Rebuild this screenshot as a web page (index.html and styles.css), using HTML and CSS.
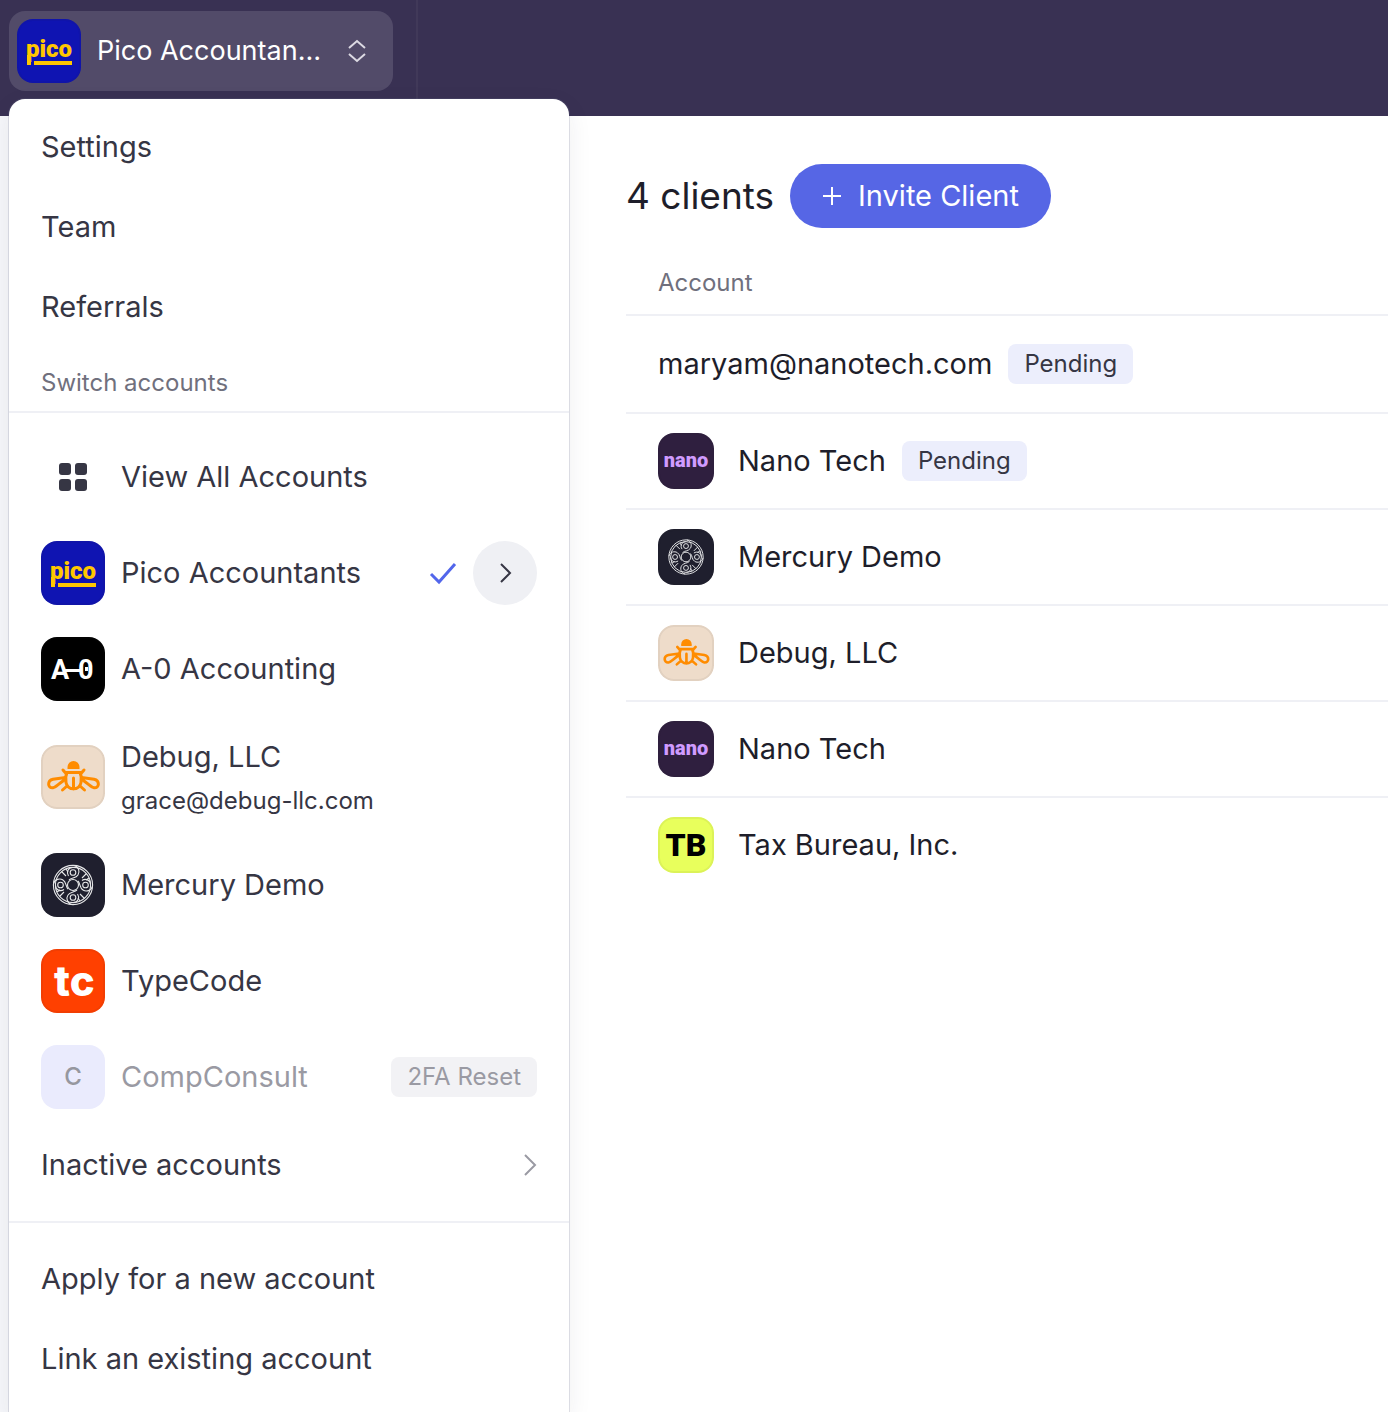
FILE: index.html
```html
<!DOCTYPE html>
<html lang="en">
<head>
<meta charset="utf-8">
<meta name="viewport" content="width=device-width, initial-scale=1">
<title>Clients</title>
<link rel="stylesheet" href="styles.css">
</head>
<body>
<svg class="sprite" aria-hidden="true">
  <symbol id="logo-debug" viewBox="0 0 64 64">
    <rect width="64" height="64" fill="#eedcca"/>
    <path fill="#ff8c00" d="M26.500 24v-2a6 6 0 0 1 12 0v2z"/>
    <g fill="none" stroke="#ff8c00" stroke-width="3" stroke-linecap="round">
      <path d="M26 27.500h13c1.500 3 1.500 7 1 10a7.600 7.600 0 0 1-15 0c-.5-3-.5-7 1-10zM32.500 33v11M22 25l3 3.500M43 25l-3 3.500M26 41l-4.500 4M39 41l4.500 4"/>
      <path d="M24.500 32.500L12 34.200c-6 1.300-5.600 9.200 0 8.600 2.600-.4 4-2.600 12-8.300M40.500 32.500L53 34.200c6 1.300 5.600 9.200 0 8.600-2.600-.4-4-2.600-12-8.300"/>
    </g>
  </symbol>
  <symbol id="logo-mercury" viewBox="0 0 64 64">
    <rect width="64" height="64" fill="#1f1f2e"/>
    <g fill="none" stroke="#e6e7e8" stroke-width="1.100">
      <circle cx="32" cy="32" r="19.600"/>
      <circle cx="32" cy="32" r="17.600"/>
      <circle cx="32" cy="32" r="5.500"/>
      <g id="knot">
        <circle cx="32" cy="19.500" r="2.800"/>
        <path d="M33 12.500c5 1 6 6.500 4 9.500-2 3.500-6.500 2.500-9 5"/>
        <path d="M31.500 14.500c-4.500 0-6.500 5-4 8.500"/>
        <path d="M20.500 18.500l4.500 4.500M25 16l2 3"/>
      </g>
      <use href="#knot" transform="rotate(90 32 32)"/>
      <use href="#knot" transform="rotate(180 32 32)"/>
      <use href="#knot" transform="rotate(270 32 32)"/>
    </g>
  </symbol>
</svg>

<div class="app">
  <header class="topbar">
    <div class="topbar-side">
      <button class="switcher" type="button" aria-haspopup="menu" aria-expanded="true">
        <span class="avatar avatar-pico"><svg viewBox="0 0 64 64" aria-hidden="true"><text x="9" y="38">pico</text><path d="M10 36h4v10h-4zM17 42h38v4H17z"/></svg></span>
        <span class="switcher-name">Pico Accountan…</span>
        <svg class="switcher-icon" viewBox="0 0 24 24" aria-hidden="true"><path d="M4 9l8-7 8 7M4 15l8 7 8-7"/></svg>
      </button>
    </div>
  </header>

  <nav class="menu" aria-label="Account menu">
    <a class="menu-item" href="#">Settings</a>
    <a class="menu-item" href="#">Team</a>
    <a class="menu-item" href="#">Referrals</a>
    <h2 class="menu-label">Switch accounts</h2>
    <div class="accounts">
      <a class="account" href="#">
        <span class="grid-icon"><svg viewBox="0 0 28 28" aria-hidden="true"><rect width="12" height="12" rx="3"/><rect x="16" width="12" height="12" rx="3"/><rect y="16" width="12" height="12" rx="3"/><rect x="16" y="16" width="12" height="12" rx="3"/></svg></span>
        <span class="account-name">View All Accounts</span>
      </a>
      <div class="account">
        <a class="account-link" href="#">
          <span class="avatar avatar-pico"><svg viewBox="0 0 64 64" aria-hidden="true"><text x="9" y="38">pico</text><path d="M10 36h4v10h-4zM17 42h38v4H17z"/></svg></span>
          <span class="account-name">Pico Accountants</span>
          <svg class="check" viewBox="0 0 28 24" aria-hidden="true"><path d="M2 13l8 8L26 3"/></svg>
        </a>
        <button class="round-button" type="button" aria-label="Open Pico Accountants"><svg viewBox="0 0 24 24" aria-hidden="true"><path d="M8 3l9 9-9 9"/></svg></button>
      </div>
      <a class="account" href="#">
        <span class="avatar avatar-a0"><svg viewBox="0 0 64 64" aria-hidden="true"><text x="10" y="42">A</text><text x="37" y="42">0</text><path d="M24 32h16v3H24zM44 30h3v4h-3z"/></svg></span>
        <span class="account-name">A-0 Accounting</span>
      </a>
      <a class="account account-tall" href="#">
        <span class="avatar"><svg aria-hidden="true"><use href="#logo-debug"/></svg></span>
        <span class="account-name">Debug, LLC<span class="account-email">grace@debug-llc.com</span></span>
      </a>
      <a class="account" href="#">
        <span class="avatar"><svg aria-hidden="true"><use href="#logo-mercury"/></svg></span>
        <span class="account-name">Mercury Demo</span>
      </a>
      <a class="account" href="#">
        <span class="avatar avatar-typecode"><svg viewBox="0 0 64 64" aria-hidden="true"><text x="13" y="47">tc</text></svg></span>
        <span class="account-name">TypeCode</span>
      </a>
      <a class="account account-disabled" href="#" aria-disabled="true">
        <span class="avatar avatar-letter">C</span>
        <span class="account-name">CompConsult</span>
        <span class="badge badge-muted">2FA Reset</span>
      </a>
      <button class="menu-item menu-more" type="button">Inactive accounts<svg viewBox="0 0 14 24" aria-hidden="true"><path d="M2 2l10 10L2 22"/></svg></button>
    </div>
    <div class="menu-footer">
      <a class="menu-item" href="#">Apply for a new account</a>
      <a class="menu-item" href="#">Link an existing account</a>
    </div>
  </nav>

  <div class="body">
    <aside class="sidebar"></aside>
    <main class="content">
      <div class="heading">
        <h1>4 clients</h1>
        <button class="invite" type="button"><svg viewBox="0 0 20 20" aria-hidden="true"><path d="M10 1v18M1 10h18"/></svg>Invite Client</button>
      </div>
      <table class="clients">
        <thead><tr><th scope="col">Account</th></tr></thead>
        <tbody>
          <tr><td><div class="client"><span class="client-name">maryam@nanotech.com</span><span class="badge">Pending</span></div></td></tr>
          <tr><td><div class="client"><span class="avatar avatar-small avatar-nano"><svg viewBox="0 0 56 56" aria-hidden="true"><text x="28" y="34" text-anchor="middle">nano</text></svg></span><span class="client-name">Nano Tech</span><span class="badge">Pending</span></div></td></tr>
          <tr><td><div class="client"><span class="avatar avatar-small"><svg aria-hidden="true"><use href="#logo-mercury"/></svg></span><span class="client-name">Mercury Demo</span></div></td></tr>
          <tr><td><div class="client"><span class="avatar avatar-small"><svg aria-hidden="true"><use href="#logo-debug"/></svg></span><span class="client-name">Debug, LLC</span></div></td></tr>
          <tr><td><div class="client"><span class="avatar avatar-small avatar-nano"><svg viewBox="0 0 56 56" aria-hidden="true"><text x="28" y="34" text-anchor="middle">nano</text></svg></span><span class="client-name">Nano Tech</span></div></td></tr>
          <tr><td><div class="client"><span class="avatar avatar-small avatar-tax"><svg viewBox="0 0 56 56" aria-hidden="true"><text x="28" y="39" text-anchor="middle">TB</text></svg></span><span class="client-name">Tax Bureau, Inc.</span></div></td></tr>
        </tbody>
      </table>
    </main>
  </div>
</div>
</body>
</html>
```
FILE: styles.css
```css
* { box-sizing: border-box; }

body {
  margin: 0;
  background: #fff;
  color: #1e1e2a;
  font: 400 29px/40px Inter, "Liberation Sans", sans-serif;
}

a { color: inherit; text-decoration: none; }

button {
  border: 0;
  padding: 0;
  background: none;
  color: inherit;
  font: inherit;
  cursor: pointer;
}

svg { display: block; flex: none; }

.sprite { position: absolute; width: 0; height: 0; }

.app {
  position: relative;
  display: flex;
  flex-direction: column;
  min-height: 100vh;
}

/* Top bar */
.topbar { height: 116px; background: #393153; }

.topbar-side {
  width: 418px;
  height: 100%;
  padding: 11px 23px 0 9px;
  border-right: 2px solid #413959;
}

.switcher {
  display: flex;
  align-items: center;
  gap: 16px;
  width: 100%;
  height: 80px;
  padding: 0 24px 0 8px;
  border-radius: 16px;
  background: #524b69;
  color: #fff;
  font-size: 27px;
  text-align: left;
}

.switcher-name { flex: 1; white-space: nowrap; }

.switcher-icon {
  width: 24px;
  height: 24px;
  fill: none;
  stroke: #dcdae3;
  stroke-width: 2;
}

/* Avatars and logos */
.avatar {
  position: relative;
  flex: none;
  width: 64px;
  height: 64px;
  border-radius: 16px;
  overflow: hidden;
}

.avatar svg { width: 100%; height: 100%; }

.avatar::after {
  content: "";
  position: absolute;
  inset: 0;
  border-radius: inherit;
  box-shadow: inset 0 0 0 2px rgba(32, 32, 32, 0.06);
}

.avatar-small { width: 56px; height: 56px; }

.avatar-letter {
  background: #eaebfd;
  color: #96979f;
  font-size: 24px;
  font-weight: 500;
  line-height: 64px;
  text-align: center;
}

.avatar-letter::after { box-shadow: none; }

.avatar-pico { background: #0f14b2; font: 900 24px Roboto, sans-serif; fill: #ffc700; }
.avatar-a0 { background: #000; font: 700 27px Roboto, sans-serif; fill: #fff; }
.avatar-typecode { background: #ff4000; font: 800 42px Inter, sans-serif; fill: #fff; }
.avatar-nano { background: #2f1f3f; font: 900 20px Roboto, sans-serif; fill: #d09bff; }
.avatar-tax { background: #e8ff5c; font: 900 32px Roboto, sans-serif; fill: #000; }

/* Account menu */
.menu {
  position: absolute;
  top: 99px;
  bottom: 0;
  left: 9px;
  z-index: 1;
  width: 560px;
  padding-top: 8px;
  border-radius: 16px 16px 0 0;
  background: #fff;
  color: #363644;
  box-shadow: 0 0 0 1px rgba(112, 115, 147, 0.2), 0 8px 24px rgba(39, 42, 60, 0.08);
}

.menu-item {
  display: flex;
  align-items: center;
  justify-content: space-between;
  width: 100%;
  height: 80px;
  padding: 0 32px;
}

.menu-label {
  margin: 0;
  padding: 20px 32px 12px;
  border-bottom: 2px solid #eff0f5;
  color: #70707d;
  font-size: 24px;
  font-weight: 400;
  line-height: 32px;
}

.accounts { padding: 16px 0; border-bottom: 2px solid #eff0f5; }

.account {
  display: flex;
  align-items: center;
  gap: 16px;
  height: 96px;
  padding: 0 32px;
}

.account-tall { height: 120px; }

.account-link {
  display: flex;
  flex: 1;
  align-items: center;
  gap: 16px;
}

.account-name { flex: 1; }

.account-email {
  display: block;
  margin-top: 8px;
  font-size: 24px;
  line-height: 32px;
}

.grid-icon { display: grid; place-items: center; width: 64px; height: 64px; }
.grid-icon svg { width: 28px; height: 28px; fill: #363644; }

.check {
  width: 28px;
  height: 24px;
  fill: none;
  stroke: #5266eb;
  stroke-width: 3;
}

.round-button {
  display: grid;
  place-items: center;
  width: 64px;
  height: 64px;
  border-radius: 50%;
  background: #eff0f4;
}

.round-button svg {
  width: 24px;
  height: 24px;
  fill: none;
  stroke: #363644;
  stroke-width: 2;
}

.account-disabled .account-name { color: #9a9aa3; }

.menu-more svg {
  width: 14px;
  height: 24px;
  fill: none;
  stroke: #9a9aa3;
  stroke-width: 2;
}

.menu-footer { padding-top: 16px; }

.badge {
  padding: 0 16px;
  border-radius: 8px;
  background: #eceefc;
  color: #363644;
  font-size: 24px;
}

.badge-muted { background: #f2f2f5; color: #9a9aa3; }

/* Page */
.body { display: flex; flex: 1; }

.sidebar { width: 418px; background: #f6f7fa; }

.content { flex: 1; padding: 48px 0 0 208px; }

.heading { display: flex; align-items: center; gap: 16px; }

.heading h1 {
  margin: 0;
  font-size: 37px;
  font-weight: 400;
  line-height: 48px;
}

.invite {
  display: flex;
  align-items: center;
  gap: 16px;
  height: 64px;
  padding: 0 32px;
  border-radius: 32px;
  background: #5666e5;
  color: #fff;
}

.invite svg {
  width: 20px;
  height: 20px;
  fill: none;
  stroke: #fff;
  stroke-width: 2;
}

.clients {
  width: 100%;
  margin-top: 24px;
  border-spacing: 0;
}

.clients th {
  height: 64px;
  padding: 0 32px;
  border-bottom: 2px solid #eff0f5;
  color: #70707d;
  font-size: 24px;
  font-weight: 400;
  text-align: left;
}

.clients td {
  height: 96px;
  padding: 0 32px;
  border-bottom: 2px solid #eff0f5;
}

.clients tbody tr:first-child td { height: 98px; }
.clients tbody tr:last-child td { border-bottom-color: transparent; }

.client { display: flex; align-items: center; gap: 16px; }
.client .avatar { margin-right: 8px; }
```
